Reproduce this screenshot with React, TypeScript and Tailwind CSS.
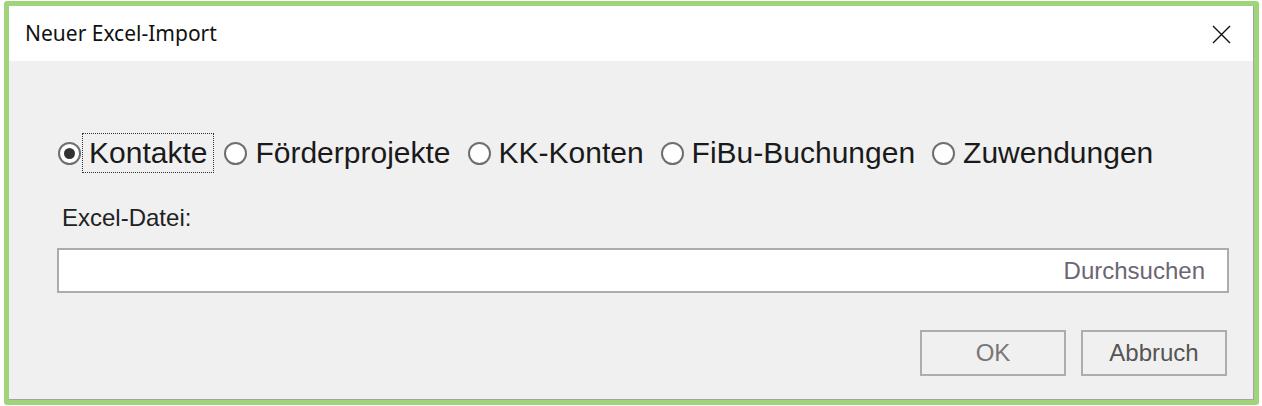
import { useState } from 'react';

const options = ['Kontakte', 'Förderprojekte', 'KK-Konten', 'FiBu-Buchungen', 'Zuwendungen'];

function Radio({ checked }: { checked: boolean }) {
  return (
    <span className="flex h-[23px] w-[23px] shrink-0 items-center justify-center rounded-full border-2 border-[#6f6f6f] bg-white">
      {checked && <span className="h-[11px] w-[11px] rounded-full bg-[#333333]" />}
    </span>
  );
}

export default function App() {
  const [selected, setSelected] = useState('Kontakte');

  return (
    <div className="h-[406px] w-[1262px] bg-white pl-[4px] pt-[1px]">
      <div className="h-[404px] w-[1255px] rounded-[3px] border-[5px] border-[#9fd47b]">
        <div className="flex h-full w-full flex-col border-b border-r border-[#a3a3a3] bg-[#f0f0f0]">
          {/* title bar */}
          <div className="flex h-[55px] shrink-0 items-center justify-between bg-white pl-[16px] pr-[22px]">
            <span className="text-[21px] text-[#111]" style={{ fontFamily: '"Noto Sans", "Open Sans", sans-serif' }}>
              Neuer Excel-Import
            </span>
            <svg width="19" height="19" viewBox="0 0 19 19" className="mt-[2px]">
              <path d="M1 1 L18 18 M18 1 L1 18" stroke="#111" strokeWidth="1.4" fill="none" />
            </svg>
          </div>

          {/* body */}
          <div className="flex flex-1 flex-col pl-[48px] pr-[24px] pt-[72px]" style={{ fontFamily: '"Liberation Sans", Arial, sans-serif' }}>
            <div className="flex h-[40px] items-center pl-[1px]">
              {options.map((o) => (
                <label
                  key={o}
                  className="mr-[10px] flex cursor-default items-center"
                  onClick={() => setSelected(o)}
                >
                  <Radio checked={selected === o} />
                  <span
                    className={
                      'ml-[1px] flex h-[40px] items-center px-[6px] text-[30px] leading-none text-[#1a1a1a] ' +
                      (o === 'Kontakte' ? 'border border-dotted border-[#333]' : 'border border-transparent')
                    }
                  >
                    {o}
                  </span>
                </label>
              ))}
            </div>

            <div className="mt-[31px] pl-[5px] text-[24px] leading-[28px] text-[#222]">Excel-Datei:</div>

            <div className="mt-[16px] flex h-[45px] w-[1172px] items-center justify-end border-2 border-[#acacac] bg-white pr-[22px]">
              <span className="text-[24px] text-[#6b6673]">Durchsuchen</span>
            </div>

            <div className="mt-[37px] flex w-[1170px] justify-end gap-[15px]">
              <button className="flex h-[46px] w-[146px] items-center justify-center border-2 border-[#adadad] bg-[#f0f0f0] text-[24px] text-[#777]">
                OK
              </button>
              <button className="flex h-[46px] w-[146px] items-center justify-center border-2 border-[#adadad] bg-[#f0f0f0] text-[24px] text-[#555]">
                Abbruch
              </button>
            </div>
          </div>
        </div>
      </div>
    </div>
  );
}
